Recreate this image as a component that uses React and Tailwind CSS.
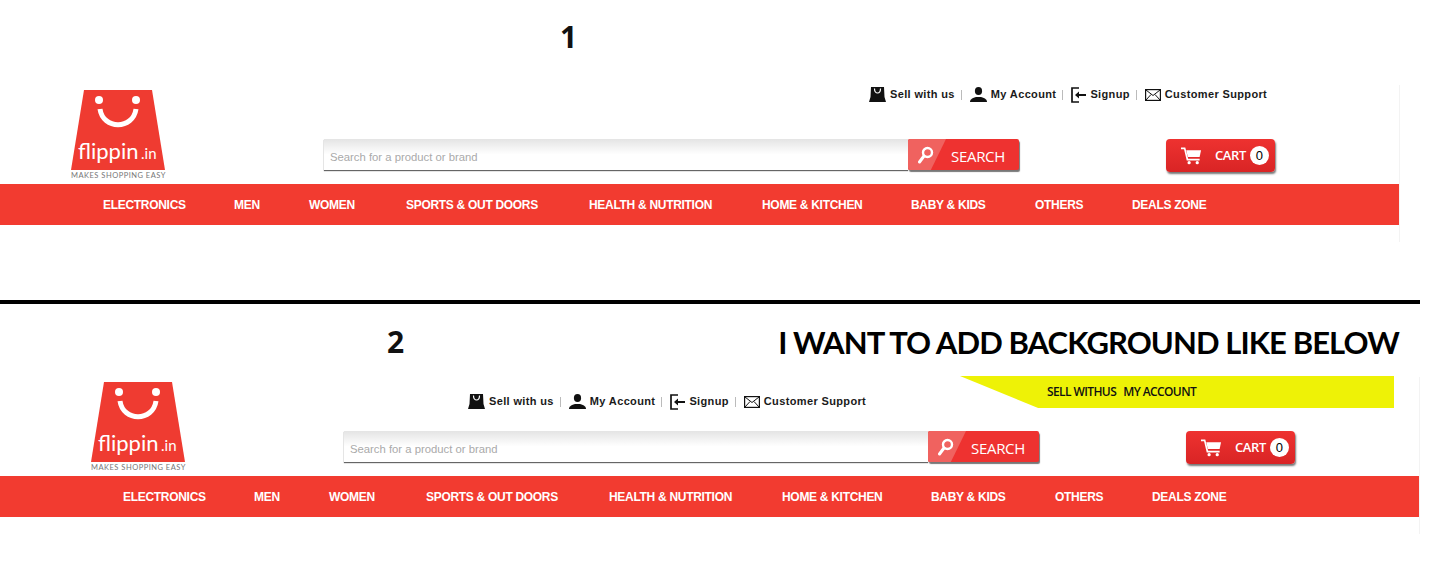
import React from 'react';

const navItems = [
  ['ELECTRONICS', 'w-[131px]'],
  ['MEN', 'w-[75px]'],
  ['WOMEN', 'w-[97px]'],
  ['SPORTS & OUT DOORS', 'w-[183px]'],
  ['HEALTH & NUTRITION', 'w-[173px]'],
  ['HOME & KITCHEN', 'w-[149px]'],
  ['BABY & KIDS', 'w-[124px]'],
  ['OTHERS', 'w-[97px]'],
  ['DEALS ZONE', 'w-[90px]'],
];

function BagIcon() {
  return (
    <svg width="17" height="15" viewBox="0 0 17 15">
      <path d="M2 0h13l.5 10 1.500 5H0l1.500-5z" fill="#111" />
      <path d="M5.500 1.500c0 6 6 6 6 0" fill="none" stroke="#fff" strokeWidth="1.200" />
    </svg>
  );
}

function UserIcon() {
  return (
    <svg width="17" height="15" viewBox="0 0 17 15">
      <ellipse cx="8.500" cy="4" rx="3.600" ry="4" fill="#111" />
      <path d="M0 15c0-2.500 1.500-3.500 6-5h5c4.500 1.500 6 2.500 6 5z" fill="#111" />
    </svg>
  );
}

function SignupIcon() {
  return (
    <svg width="15" height="16" viewBox="0 0 15 16">
      <path d="M8 1H1v14h7" fill="none" stroke="#111" strokeWidth="1.700" />
      <path d="M4 8l4-3.500V7h7v2H8v2.500z" fill="#111" />
    </svg>
  );
}

function MailIcon() {
  return (
    <svg width="16" height="12" viewBox="0 0 16 12">
      <rect x="0.600" y="0.600" width="14.800" height="10.800" fill="none" stroke="#111" strokeWidth="1.200" />
      <path d="M1 1l7 5.500L15 1M1 11l5-5.500M15 11l-5-5.500" fill="none" stroke="#111" strokeWidth="1" />
    </svg>
  );
}

function SearchIcon() {
  return (
    <svg width="16" height="18" viewBox="0 0 16 18">
      <circle cx="9.500" cy="6.500" r="4.500" fill="none" stroke="#fff" strokeWidth="2.400" />
      <path d="M6 10l-4.500 6" stroke="#fff" strokeWidth="3" strokeLinecap="round" />
    </svg>
  );
}

function CartIcon() {
  return (
    <svg width="21" height="18" viewBox="0 0 22 18" fill="#fff">
      <path d="M0 0h4.500l3 12h12v1.600H6L3.200 1.800H0z" />
      <path d="M5.500 3H21l-1.500 7H7.200z" />
      <circle cx="8.500" cy="16" r="1.700" />
      <circle cx="17" cy="16" r="1.700" />
    </svg>
  );
}

function Logo() {
  return (
    <div className="w-[96px] shrink-0">
      <svg width="96" height="80" viewBox="0 0 96 80" className="block overflow-visible">
        <path d="M14 0h68l13 80H1z" fill="#ef3b31" />
        <circle cx="29" cy="10" r="4" fill="#fff" />
        <circle cx="66" cy="10" r="4" fill="#fff" />
        <path d="M30 19c3 21 33 21 36 0" fill="none" stroke="#fff" strokeWidth="5" />
        <text x="8" y="69" fill="#fff" fontSize="22" fontFamily="Lato, sans-serif">flippin</text>
        <text x="71" y="69" fill="#fff" fontSize="15" fontFamily="Lato, sans-serif">.in</text>
      </svg>
      <div className="ml-[1px] mt-[2px] whitespace-nowrap text-[7.5px] leading-[8px] tracking-[0.5px] text-[#777] font-['Lato',sans-serif]">
        MAKES SHOPPING EASY
      </div>
    </div>
  );
}

function TopLink({ icon, label, divider }) {
  return (
    <>
      {icon}
      <span className="ml-[4px] text-[11px] font-bold tracking-[0.36px] text-[#1a1a1a]">{label}</span>
      {divider && <span className="ml-[6px] mr-[8px] h-[10px] w-px bg-[#bbb]" />}
    </>
  );
}

function Header({ outer, logoPad, linksPad }) {
  return (
    <div className={`border-r border-[#f3f3f3] pb-[17px] ${outer}`}>
      <div className={`flex pt-[5px] ${logoPad}`}>
        <Logo />
        <div className="-mt-[3px] ml-[158px] flex h-[97px] flex-col">
          <div className={`h-[52px] font-['Liberation_Sans',sans-serif] ${linksPad}`}>
            <div className="flex h-[15px] items-center">
              <TopLink icon={<BagIcon />} label="Sell with us" divider />
              <TopLink icon={<UserIcon />} label="My Account" divider />
              <TopLink icon={<SignupIcon />} label="Signup" divider />
              <TopLink icon={<MailIcon />} label="Customer Support" />
            </div>
          </div>
          <div className="flex items-start">
            <div className="flex h-[31px] w-[584px] items-center bg-gradient-to-b from-[#e4e4e4] via-white to-white pl-[6px] pt-[5px] font-['Liberation_Sans',sans-serif] text-[11.3px] text-[#aaa] shadow-[0_1px_1px_#666]">
              Search for a product or brand
            </div>
            <div className="relative flex h-[31px] w-[111px] items-center overflow-hidden rounded-[2px] bg-[#ee3230] shadow-[1px_2px_1px_#777]">
              <div className="absolute inset-y-0 left-0 w-[38px] bg-[#f0625f] [clip-path:polygon(0_0,100%_0,60%_100%,0_100%)]" />
              <div className="relative ml-[10px]"><SearchIcon /></div>
              <span className="relative ml-[17px] pt-[3px] font-['Open_Sans',sans-serif] text-[15px] tracking-[-0.3px] text-white">SEARCH</span>
            </div>
            <div className="ml-[147px] flex h-[33px] w-[109px] items-center rounded-[4px] bg-gradient-to-b from-[#ee3230] to-[#d92425] pl-[15px] shadow-[1px_2px_2px_#777]">
              <CartIcon />
              <span className="ml-[13px] font-['Open_Sans',sans-serif] text-[13px] font-semibold tracking-[-0.4px] text-white">CART</span>
              <span className="ml-[4px] flex h-[19px] w-[19px] items-center justify-center rounded-full bg-white font-['Liberation_Sans',sans-serif] text-[13px] text-black">0</span>
            </div>
          </div>
        </div>
      </div>
      <nav className={`flex h-[41px] items-center bg-[#f23b30] font-['Liberation_Sans',sans-serif] text-[12px] font-bold tracking-[-0.3px] text-white ${logoPad}`}>
        <div className="flex pl-[33px]">
          {navItems.map(([label, width]) => (
            <span key={label} className={`${width} whitespace-nowrap`}>{label}</span>
          ))}
        </div>
      </nav>
    </div>
  );
}

export default function App() {
  return (
    <div className="relative h-[585px] w-[1440px] overflow-hidden bg-white">
      <section className="h-[300px]">
        <div className="flex h-[85px] pl-[560px] pt-[18px] font-['Open_Sans',sans-serif] text-[30px] leading-[38px] font-bold text-[#111]">1</div>
        <Header outer="w-[1400px]" logoPad="pl-[70px]" linksPad="pl-[545px]" />
      </section>
      <div className="h-[4px] w-[1420px] bg-black" />
      <section>
        <div className="flex h-[73px] pt-[19px] font-['Open_Sans',sans-serif] text-[#111]">
          <span className="ml-[387px] text-[30px] leading-[38px] font-bold">2</span>
          <span className="ml-[374px] whitespace-nowrap font-['Lato',sans-serif] text-[31px] leading-[38px] font-bold tracking-[-0.9px] text-black">I WANT TO ADD BACKGROUND LIKE BELOW</span>
        </div>
        <Header outer="w-[1420px]" logoPad="pl-[90px]" linksPad="pl-[124px] pt-[15px]" />
      </section>
      <div className="absolute left-[960px] top-[376px] flex h-[32px] w-[434px] items-center bg-[#eef206] pl-[87px] font-['Open_Sans',sans-serif] text-[12px] font-semibold tracking-[-0.6px] text-[#111] [clip-path:polygon(0_0,100%_0,100%_100%,18%_100%)]">
        <span>SELL WITHUS</span>
        <span className="ml-[7px]">MY ACCOUNT</span>
      </div>
    </div>
  );
}
